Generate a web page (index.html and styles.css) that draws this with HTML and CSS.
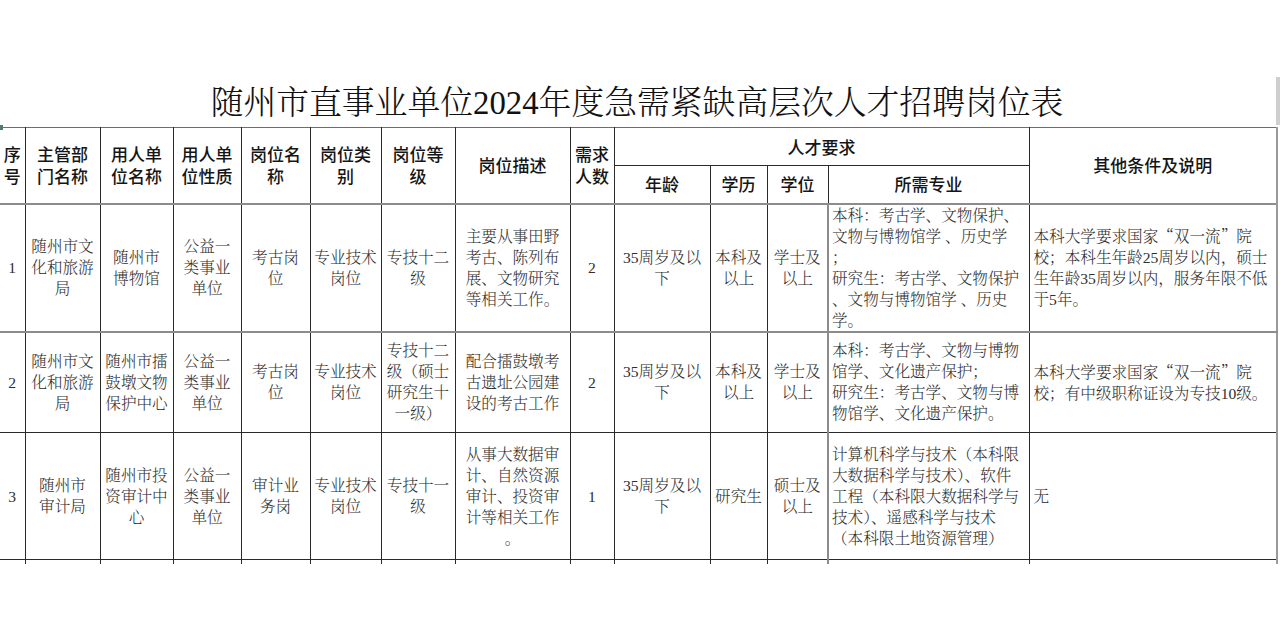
FILE: index.html
```html
<!DOCTYPE html>
<html lang="zh-CN">
<head>
<meta charset="utf-8">
<title>随州市直事业单位2024年度急需紧缺高层次人才招聘岗位表</title>
<link rel="stylesheet" href="styles.css">
</head>
<body>
<div class="page">
  <div class="scroll-stub"></div>
  <div class="edge-mark"></div>
  <h1 class="title">随州市直事业单位2024年度急需紧缺高层次人才招聘岗位表</h1>
  <table class="jobs">
    <colgroup>
      <col class="c-no"><col class="c-dept"><col class="c-unit"><col class="c-kind">
      <col class="c-post"><col class="c-type"><col class="c-level"><col class="c-desc">
      <col class="c-num"><col class="c-age"><col class="c-edu"><col class="c-deg">
      <col class="c-major"><col class="c-other">
    </colgroup>
    <thead>
      <tr class="hr1">
        <th rowspan="2">序<br>号</th>
        <th rowspan="2">主管部<br>门名称</th>
        <th rowspan="2">用人单<br>位名称</th>
        <th rowspan="2">用人单<br>位性质</th>
        <th rowspan="2">岗位名<br>称</th>
        <th rowspan="2">岗位类<br>别</th>
        <th rowspan="2">岗位等<br>级</th>
        <th rowspan="2">岗位描述</th>
        <th rowspan="2">需求<br>人数</th>
        <th colspan="4">人才要求</th>
        <th rowspan="2" class="last">其他条件及说明</th>
      </tr>
      <tr class="hr2">
        <th>年龄</th>
        <th>学历</th>
        <th>学位</th>
        <th>所需专业</th>
      </tr>
    </thead>
    <tbody>
      <tr class="r1">
        <td>1</td>
        <td>随州市文<br>化和旅游<br>局</td>
        <td>随州市<br>博物馆</td>
        <td>公益一<br>类事业<br>单位</td>
        <td>考古岗<br>位</td>
        <td>专业技术<br>岗位</td>
        <td>专技十二<br>级</td>
        <td>主要从事田野<br>考古、陈列布<br>展、文物研究<br>等相关工作。</td>
        <td>2</td>
        <td>35周岁及以<br>下</td>
        <td>本科及<br>以上</td>
        <td>学士及<br>以上</td>
        <td class="major">本科：考古学、文物保护、<br>文物与博物馆学 、历史学<br>；<br>研究生：考古学、文物保护<br>、文物与博物馆学 、历史<br>学。</td>
        <td class="other last">本科大学要求国家<span class="q">“</span>双一流<span class="q">”</span>院<br>校；本科生年龄25周岁以内，硕士<br>生年龄35周岁以内，服务年限不低<br>于5年。</td>
      </tr>
      <tr class="r2">
        <td>2</td>
        <td>随州市文<br>化和旅游<br>局</td>
        <td>随州市擂<br>鼓墩文物<br>保护中心</td>
        <td>公益一<br>类事业<br>单位</td>
        <td>考古岗<br>位</td>
        <td>专业技术<br>岗位</td>
        <td>专技十二<br>级（硕士<br>研究生十<br>一级）</td>
        <td>配合擂鼓墩考<br>古遗址公园建<br>设的考古工作</td>
        <td>2</td>
        <td>35周岁及以<br>下</td>
        <td>本科及<br>以上</td>
        <td>学士及<br>以上</td>
        <td class="major">本科：考古学、文物与博物<br>馆学、文化遗产保护；<br>研究生：考古学、文物与博<br>物馆学、文化遗产保护。</td>
        <td class="other last">本科大学要求国家<span class="q">“</span>双一流<span class="q">”</span>院<br>校；有中级职称证设为专技10级。</td>
      </tr>
      <tr class="r3">
        <td>3</td>
        <td>随州市<br>审计局</td>
        <td>随州市投<br>资审计中<br>心</td>
        <td>公益一<br>类事业<br>单位</td>
        <td>审计业<br>务岗</td>
        <td>专业技术<br>岗位</td>
        <td>专技十一<br>级</td>
        <td>从事大数据审<br>计、自然资源<br>审计、投资审<br>计等相关工作<br>。</td>
        <td>1</td>
        <td>35周岁及以<br>下</td>
        <td>研究生</td>
        <td>硕士及<br>以上</td>
        <td class="major">计算机科学与技术（本科限<br>大数据科学与技术）、软件<br>工程（本科限大数据科学与<br>技术）、遥感科学与技术<br>（本科限土地资源管理）</td>
        <td class="other last">无</td>
      </tr>
      <tr class="tick">
        <td></td><td></td><td></td><td></td><td></td><td></td><td></td>
        <td></td><td></td><td></td><td></td><td></td><td class="major"></td><td class="last"></td>
      </tr>
    </tbody>
  </table>
</div>
</body>
</html>
```

FILE: styles.css
```css
html, body {
  margin: 0;
  padding: 0;
  background: #ffffff;
}

body {
  font-family: "Liberation Serif", "Noto Serif CJK SC", "Noto Sans CJK SC", serif;
}

.page {
  position: relative;
  width: 1280px;
  height: 640px;
  overflow: hidden;
}

.scroll-stub {
  position: absolute;
  left: 1276px;
  top: 77px;
  width: 4px;
  height: 48px;
  background: #cfcfcf;
}

.edge-mark {
  position: absolute;
  left: 0;
  top: 125px;
  width: 3px;
  height: 5px;
  background: #4d8060;
}

.title {
  margin: 0 0 6px 0;
  padding: 85px 6px 0 0;
  height: 36px;
  line-height: 36px;
  font-size: 32.8px;
  font-weight: 300;
  text-align: center;
  color: #111111;
  white-space: nowrap;
}

.jobs {
  border-collapse: collapse;
  table-layout: fixed;
  width: 1278px;
}

.c-no { width: 25px; }
.c-dept { width: 75px; }
.c-unit { width: 73px; }
.c-kind { width: 68px; }
.c-post { width: 69px; }
.c-type { width: 71px; }
.c-level { width: 74px; }
.c-desc { width: 115px; }
.c-num { width: 44px; }
.c-age { width: 96px; }
.c-edu { width: 57px; }
.c-deg { width: 61px; }
.c-major { width: 201px; }
.c-other { width: 248px; }

.jobs th {
  font-family: "Noto Sans CJK SC", sans-serif;
  font-weight: 500;
  font-size: 17px;
  line-height: 22px;
  color: #151515;
  padding: 0;
  text-align: center;
  vertical-align: middle;
  border: 1px solid #2a2a2a;
  white-space: nowrap;
  overflow: hidden;
}

.hr1 th {
  border-top: 1px solid #4d8060;
}

.hr1 { height: 38px; }
.hr2 { height: 38px; }

.jobs td {
  font-size: 15.6px;
  line-height: 21px;
  font-weight: 300;
  color: #2e2e2e;
  padding: 0 1px;
  text-align: center;
  vertical-align: middle;
  border: 1px solid #2a2a2a;
  white-space: nowrap;
  overflow: hidden;
}

.jobs .q {
  font-family: "Noto Serif CJK SC", "Noto Sans CJK SC", serif;
  display: inline-block;
  width: 1em;
  text-align: center;
}

.jobs th:first-child,
.jobs td:first-child {
  border-left: none;
}

.jobs .major {
  text-align: left;
  padding-left: 3px;
  border-left: 2px solid #8c8c8c;
}

.jobs .other {
  text-align: left;
  padding-left: 4px;
}

.jobs .last {
  border-right: 2px solid #9a9a9a;
}

.r1 { height: 127px; }
.r2 { height: 101px; }
.r3 { height: 127px; }

.r1 td {
  border-top: 2px solid #8c8c8c;
  border-bottom: 2px solid #8c8c8c;
}

.tick { height: 4px; }

.tick td {
  border-bottom: none;
  font-size: 0;
  line-height: 0;
  padding: 0;
}
```
